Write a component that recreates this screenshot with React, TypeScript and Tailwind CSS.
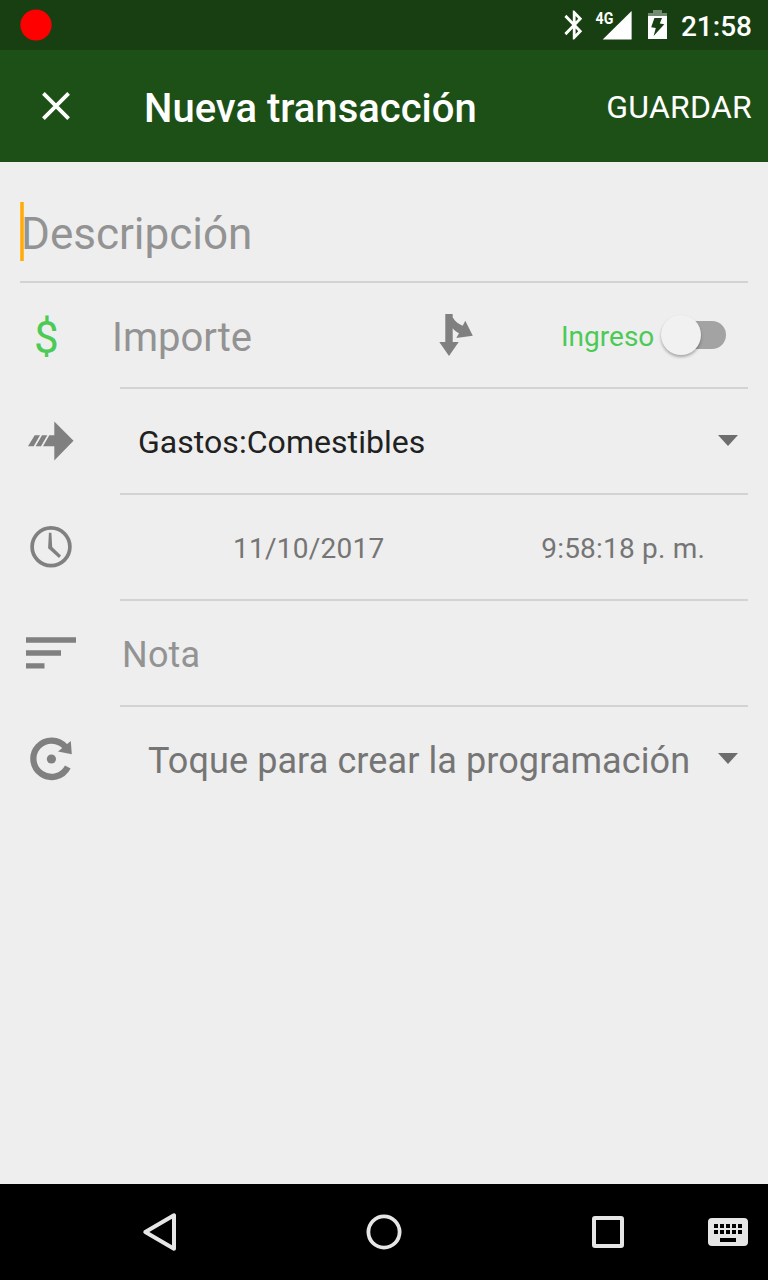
import type { ReactNode } from 'react';

function Row({ icon, children, divider = true }: { icon: ReactNode; children: ReactNode; divider?: boolean }) {
  return (
    <>
      <div className="flex h-[104px] items-center pr-5">
        <div className="w-[100px] shrink-0">{icon}</div>
        {children}
      </div>
      {divider && <div className="mr-5 ml-[120px] h-[2px] bg-[#d3d3d3]" />}
    </>
  );
}

function Caret() {
  return (
    <svg className="mr-[10px] mb-[2px] shrink-0" width="20" height="11" viewBox="0 0 20 11" fill="#6d6d6d">
      <path d="M0 0H20L10 11Z" />
    </svg>
  );
}

function StatusBar() {
  return (
    <header className="flex h-[50px] items-center bg-[#173f12] pr-4 pl-5 text-white">
      <svg width="32" height="32" viewBox="20 9 32 32">
        <circle cx="36" cy="25" r="15.6" fill="#f00" />
      </svg>
      <svg className="ml-auto" width="120" height="50" viewBox="556 0 120 50" fill="#fff">
        <path
          transform="translate(557.4 7.6) scale(1.4 1.45)"
          d="M17.71 7.71L12 2h-1v7.59L6.41 5 5 6.41 10.59 12 5 17.59 6.41 19 11 14.41V22h1l5.71-5.71-4.3-4.29 4.3-4.29zM13 5.83l1.88 1.88L13 9.59V5.83zm1.88 10.46L13 18.17v-3.76l1.88 1.88z"
        />
        <text x="595.5" y="23.8" textLength="17.8" lengthAdjust="spacingAndGlyphs" className="text-[17px] font-bold">
          4G
        </text>
        <path d="M602.7 39.6L631.6 11V39.6Z" />
        <path d="M653 10H662V13H667V16H648V13H653Z" opacity=".4" />
        <path d="M648 16H667V39H648Z" />
        <path d="M654.4 18H662L659.8 23.5L664.3 24.3L653.6 36L655.8 28L651.2 27.2Z" fill="#173f12" />
      </svg>
      <span className="ml-[5px] pt-[3px] text-[28px] leading-none font-medium">21:58</span>
    </header>
  );
}

export default function App() {
  return (
    <div className="flex h-[1280px] w-[768px] flex-col overflow-hidden bg-[#eeeeee] font-['Roboto',sans-serif] whitespace-nowrap">
      <StatusBar />

      <div className="flex h-[112px] items-center bg-[#1d5017] pr-4 pl-[42px] text-white">
        <svg width="28" height="28" viewBox="0 0 28 28" stroke="#fff" strokeWidth="3.8">
          <path d="M1.4 1.4L26.6 26.6M26.6 1.4L1.4 26.6" />
        </svg>
        <h1 className="ml-[74px] pt-[6px] text-[40px] leading-none font-medium tracking-[0.02px]">Nueva transacción</h1>
        <button className="ml-auto pt-[2px] text-[32px] leading-none tracking-[0.25px]">GUARDAR</button>
      </div>

      <main className="flex flex-1 flex-col">
        <div className="mx-5 flex h-[121px] items-start border-b-2 border-[#d3d3d3] pt-10">
          <div className="h-[59px] w-1 bg-[linear-gradient(90deg,#ffb938_1px,#ffab0a_1px,#ffab0a_3px,#ffb938_3px)]" />
          <span className="-ml-[3px] pt-[10px] text-[44px] leading-none text-[#939393]">Descripción</span>
        </div>

        <Row icon={<span className="block pt-[5px] pl-[34px] text-[44px] leading-none text-[#4cca56]">$</span>}>
          <span className="ml-3 w-[324px] pt-[5px] text-[40px] leading-none text-[#939393]">Importe</span>
          <svg width="40" height="50" viewBox="436 310 40 50" fill="#808080">
            <path d="M445.3 314H452.7V317.3C455 321.5 458.5 324.3 462.7 325.7L465.3 320.7L472.8 335.7L456.3 338L459 333.3C456.5 332 454.2 330.3 452.7 328.3V342H458.7L449 356L439.3 342H445.3Z" />
          </svg>
          <span className="ml-[85px] pt-[3px] text-[28px] leading-none text-[#4cca56]">Ingreso</span>
          <div className="ml-[7px] flex h-7 w-[65px] items-center rounded-full bg-[linear-gradient(90deg,transparent_20px,#a3a3a3_20px)]">
            <div className="size-10 shrink-0 rounded-full bg-[#f1f1f1] shadow-[0_2px_3px_rgba(0,0,0,0.3)]" />
          </div>
        </Row>

        <Row
          icon={
            <svg width="100" height="104" viewBox="0 389 100 104" fill="#808080">
              <path d="M34.7 435.3H40L33.7 446.3H28ZM42 435.3H47.3L41 446.3H35.7ZM49.3 435.3H54.3V421.5L73.5 440.8L54.3 460.5V446.3H43Z" />
            </svg>
          }
        >
          <span className="mr-auto ml-[38px] pt-px text-[32px] leading-none tracking-[0.05px] text-[#212121]">
            Gastos:Comestibles
          </span>
          <Caret />
        </Row>

        <Row
          icon={
            <svg width="100" height="104" viewBox="0 495 100 104" fill="none" stroke="#808080">
              <circle cx="51" cy="546.8" r="18.9" strokeWidth="3.7" />
              <path d="M48.9 532.7H51.4L52.2 547L61 555.5L59 558L48.1 548.3Z" fill="#808080" stroke="none" />
            </svg>
          }
        >
          <span className="ml-[133px] pt-1 text-[28px] leading-none tracking-[0.25px] text-[#757575]">11/10/2017</span>
          <span className="mr-[43px] ml-auto pt-1 text-[28px] leading-none tracking-[0.2px] text-[#757575]">
            9:58:18 p. m.
          </span>
        </Row>

        <Row
          icon={
            <svg width="100" height="104" viewBox="0 601 100 104" fill="#808080">
              <path d="M26 637.3H76V642.7H26ZM26 650.3H61V655.7H26ZM26 663.3H44.5V668.6H26Z" />
            </svg>
          }
        >
          <span className="ml-[22px] pt-1 text-[36px] leading-none tracking-[0.2px] text-[#939393]">Nota</span>
        </Row>

        <Row
          divider={false}
          icon={
            <svg width="100" height="104" viewBox="0 707 100 104" fill="#808080">
              <path d="M65.5 747A18.2 18.2 0 1 0 67.8 767" fill="none" stroke="#808080" strokeWidth="6.3" />
              <path d="M70.8 741L71.8 754.3L58 751.6Z" />
              <circle cx="51.4" cy="759" r="4.6" />
            </svg>
          }
        >
          <span className="mr-auto ml-[48px] pt-1 text-[36px] leading-none tracking-[0.09px] text-[#757575]">
            Toque para crear la programación
          </span>
          <Caret />
        </Row>
      </main>

      <nav className="flex h-24 items-center bg-black pl-[142px]">
        <svg width="36" height="40" viewBox="142 1212 36 40" fill="none" stroke="#e6e6e6" strokeWidth="4" strokeLinejoin="round">
          <path d="M145.3 1232L174 1215.3V1248.7Z" />
        </svg>
        <svg className="ml-[186px]" width="40" height="40" viewBox="0 0 40 40" fill="none" stroke="#e6e6e6" strokeWidth="3.8">
          <circle cx="20" cy="20" r="15.6" />
        </svg>
        <div className="ml-[188px] size-8 rounded-[3px] border-4 border-[#e6e6e6]" />
        <svg className="ml-[84px]" width="40" height="28" viewBox="0 0 40 28" fill="#e6e6e6">
          <rect width="40" height="28" rx="4" />
          <path
            fill="#000"
            d="M6 6h4v4h-4zM12 6h4v4h-4zM18 6h4v4h-4zM24 6h4v4h-4zM30 6h4v4h-4zM6 12h4v4h-4zM12 12h4v4h-4zM18 12h4v4h-4zM24 12h4v4h-4zM30 12h4v4h-4zM12 20h16v4h-16z"
          />
        </svg>
      </nav>
    </div>
  );
}
